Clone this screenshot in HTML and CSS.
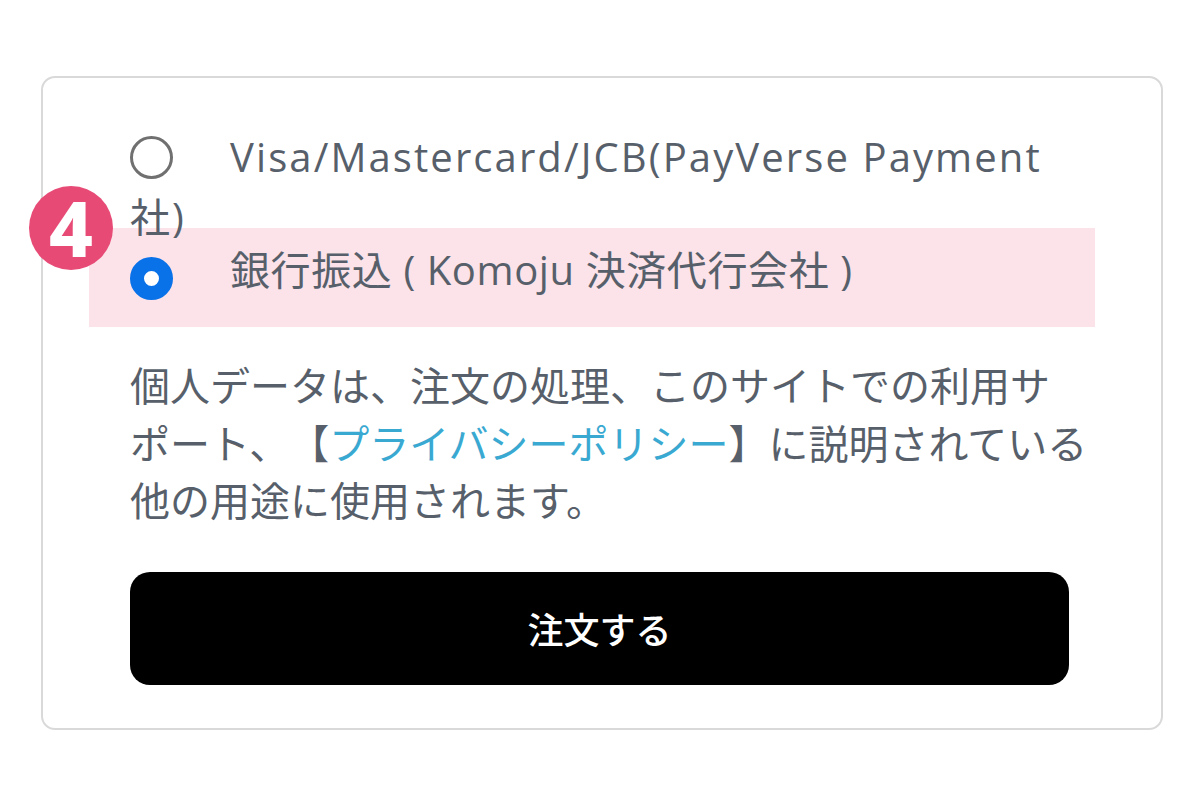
FILE: index.html
```html
<!DOCTYPE html>
<html lang="ja">
<head>
<meta charset="utf-8">
<title>注文</title>
<link rel="stylesheet" href="styles.css">
</head>
<body>
<div class="card">
  <div class="highlight"></div>
  <span class="badge">4</span>
  <div class="content">
    <div class="options">
      <label class="option"><input type="radio" name="pay" class="radio"><span class="opt-text">Visa/Mastercard/JCB(PayVerse Payment社)</span></label>
      <label class="option option-second"><input type="radio" name="pay" class="radio" checked><span class="opt-text">銀行振込 ( Komoju 決済代行会社 )</span></label>
    </div>
    <p class="privacy">個人データは、注文の処理、このサイトでの利用サ<br>ポート、【<a href="#" class="link">プライバシーポリシー</a>】に説明されている<br>他の用途に使用されます。</p>
    <button class="order-btn" type="button">注文する</button>
  </div>
</div>
</body>
</html>
```
FILE: styles.css
```css
* { box-sizing: border-box; }
body {
  margin: 0;
  background: #ffffff;
  font-family: "Open Sans", "Noto Sans CJK JP", sans-serif;
  color: #57606a;
}
.card {
  position: relative;
  margin: 76px 0 0 41px;
  width: 1122px;
  height: 654px;
  border: 2px solid #d9d9d9;
  border-radius: 14px;
  padding: 49px 92px 0 87px;
}
.highlight {
  position: absolute;
  left: 46px;
  top: 150px;
  width: 1006px;
  height: 99px;
  background: #fce3e9;
  z-index: 0;
}
.badge {
  position: absolute;
  left: -14px;
  top: 108px;
  width: 84px;
  height: 84px;
  border-radius: 50%;
  background: #e84a76;
  color: #fff;
  font-family: "Noto Sans", sans-serif;
  font-weight: 800;
  font-size: 76px;
  line-height: 84px;
  text-align: center;
  z-index: 2;
}
.content {
  position: relative;
  z-index: 1;
}
.options {
  display: flex;
  flex-direction: column;
}
.option {
  display: block;
  font-size: 40px;
  line-height: 60px;
  color: #57606a;
}
.opt-text {
  font-family: "Open Sans", "Noto Sans CJK JP", sans-serif;
  letter-spacing: 2.1px;
}
.option-second .opt-text {
  letter-spacing: 0.6px;
}
.option-second {
  margin-top: -7px;
}
.radio {
  appearance: none;
  -webkit-appearance: none;
  margin: 0 57px 0 0;
  width: 43px;
  height: 43px;
  border-radius: 50%;
  border: 3px solid #707070;
  background: #fff;
  vertical-align: middle;
  position: relative;
  top: -4px;
}
.radio:checked {
  border: 14px solid #0a72e8;
  top: 4px;
}
.privacy {
  margin: 56px 0 0 0;
  font-family: "Noto Sans CJK JP", sans-serif;
  font-size: 40px;
  line-height: 57.5px;
  color: #57606a;
  white-space: nowrap;
  text-spacing-trim: space-all;
}
.link {
  color: #3aa9d2;
  text-decoration: none;
}
.order-btn {
  display: block;
  margin-top: 43px;
  width: 100%;
  height: 113px;
  border: none;
  border-radius: 20px;
  background: #000;
  color: #fff;
  font-family: "Noto Sans CJK JP", sans-serif;
  font-size: 36px;
  font-weight: 500;
}
```
